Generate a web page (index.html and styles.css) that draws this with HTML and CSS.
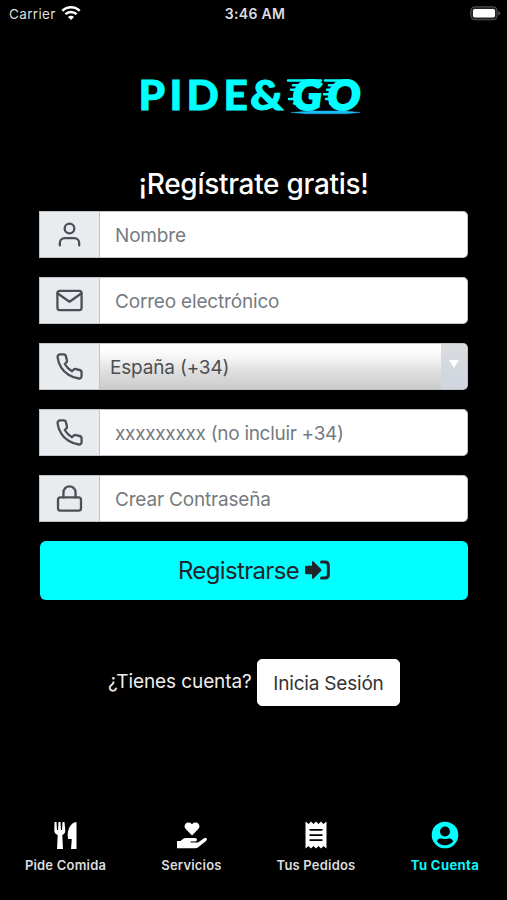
FILE: index.html
```html
<!DOCTYPE html>
<html lang="es">
<head>
<meta charset="utf-8">
<meta name="viewport" content="width=device-width">
<title>Pide&amp;Go</title>
<link rel="stylesheet" href="styles.css">
</head>
<body>
<svg width="0" height="0" class="defs">
  <symbol id="phone" viewBox="0 0 24 24"><path d="M22 16.92v3a2 2 0 0 1-2.18 2 19.79 19.79 0 0 1-8.63-3.07 19.5 19.5 0 0 1-6-6 19.79 19.79 0 0 1-3.07-8.67A2 2 0 0 1 4.11 2h3a2 2 0 0 1 2 1.72 12.84 12.84 0 0 0 .7 2.81 2 2 0 0 1-.45 2.11L8.09 9.91a16 16 0 0 0 6 6l1.27-1.27a2 2 0 0 1 2.11-.45 12.84 12.84 0 0 0 2.81.7A2 2 0 0 1 22 16.92z"/></symbol>
</svg>
<header class="status">
  <div class="carrier"><span>Carrier</span>
    <svg width="20" height="15" viewBox="0 0 20 15" fill="none" stroke="#fff" stroke-width="2.5"><path d="M1.300 4.800a12.500 12.500 0 0 1 17.400 0M4.400 8.200a8 8 0 0 1 11.200 0"/><path d="M10 14l-3-3a4.200 4.200 0 0 1 6 0z" fill="#fff" stroke="none"/></svg>
  </div>
  <time>3:46 AM</time>
  <svg class="battery" width="31" height="15" viewBox="0 0 31 15"><rect x=".8" y=".8" width="26.4" height="13" rx="4" fill="#222" stroke="#555"/><rect x="3" y="3" width="22" height="8.6" rx="1.8" fill="#fff"/><path d="M28.4 5v4.6q1.8-.7 1.8-2.3T28.4 5z" fill="#555"/></svg>
</header>
<main>
  <svg class="logo" width="230" height="42" viewBox="0 0 230 42" fill="#0ff" stroke="#0ff">
    <text class="pide" x="-1.5 29.500 46.500 83.500" y="35">PIDE</text>
    <text class="pide" transform="translate(110 35) scale(1.080 1)">&amp;</text>
    <text class="go" transform="translate(152.500 34.500) scale(1.060 1)" x="0 33" y="0">GO</text>
    <path class="speed" d="M148 5.500h33M153 10.300h9M151 14.800h8M155 19.300h3M149 24h9M154 28.500h5M185 5.500h23M189 10.300h9M187 14.800h8M184 19.300h10M186 24h8M190 28.500h6"/>
    <path class="ground" d="M151 37.500l20-1.500h35l14 1.500-14 1.300h-40z"/>
  </svg>
  <h1>¡Regístrate gratis!</h1>
  <form>
    <label class="field"><span class="addon"><svg viewBox="0 0 24 24"><path d="M20 21v-2a4 4 0 0 0-4-4H8a4 4 0 0 0-4 4v2"/><circle cx="12" cy="7" r="4"/></svg></span><span class="input">Nombre</span></label>
    <label class="field"><span class="addon"><svg viewBox="0 0 24 24"><rect x="2" y="4" width="20" height="16" rx="2"/><path d="M22 6l-10 7L2 6"/></svg></span><span class="input">Correo electrónico</span></label>
    <label class="field"><span class="addon"><svg><use href="#phone"/></svg></span><span class="input select"><span>España (+34)</span><span class="caret"><i></i></span></span></label>
    <label class="field"><span class="addon"><svg><use href="#phone"/></svg></span><span class="input hint">xxxxxxxxx (no incluir +34)</span></label>
    <label class="field"><span class="addon"><svg viewBox="0 0 24 24"><rect x="2.500" y="11" width="19" height="11" rx="2"/><path d="M7 11V7a5 5 0 0 1 10 0v4"/></svg></span><span class="input">Crear Contraseña</span></label>
    <button class="submit" type="button"><span>Registrarse</span>
      <svg width="25" height="20" viewBox="0 0 25 20"><path d="M0 7q0-1.300 1.300-1.300H7V2.200Q7 .3 8.600 1.600L16 9q1 1 0 2l-7.400 7.400Q7 19.700 7 17.800v-3.500H1.300Q0 14.300 0 13z"/><path class="door" d="M16.500 2H20q3.300 0 3.300 3.300v9.400Q23.300 18 20 18h-3.500"/></svg>
    </button>
  </form>
  <div class="login"><span>¿Tienes cuenta?</span><button type="button">Inicia Sesión</button></div>
</main>
<nav>
  <a><svg width="25" height="28" viewBox="0 0 25 28"><path d="M1.500 1h2l.5 8h1l.5-8h2l.5 8h1l.5-8h2l.8 8.500q0 3-3 4.500l.7 14H4l.7-14q-3.400-1.500-3.400-4.500zM23.500 1v27H18l.8-10H15C13.500 9 17.500 1.500 23.500 1z"/></svg><span>Pide Comida</span></a>
  <a><svg width="32" height="28" viewBox="0 0 32 28"><path d="M16 14.500L9.500 7.800C6.500 4.500 11-1.500 16 3c5-4.500 9.500 1.500 6.500 4.800zM1 20h3.500l2.800-2.200q1-.8 2.500-.8H19q2 0 2 1.700T19 20.400h-4.500v1.100H22l6-4.300q1.500-1 2.600.2.900 1.300-.6 2.500L22.500 26q-1.500 1.200-3.500 1.200H1z"/></svg><span>Servicios</span></a>
  <a><svg width="22" height="28" viewBox="0 0 22 28"><path fill-rule="evenodd" d="M.5.500l3 2.500L6 .5 8.500 3 11 .5 13.500 3 16 .5 18.500 3l3-2.500v27l-3-2.500-2.500 2.500-2.500-2.500-2.500 2.500L8.500 25 6 27.500 3.500 25l-3 2.500zM4.500 8v1.800h13V8zm0 5.200V15h13v-1.800zm0 5.100v1.800h13v-1.800z"/></svg><span>Tus Pedidos</span></a>
  <a class="active"><svg width="28" height="28" viewBox="0 0 28 28"><circle cx="14" cy="14" r="13.300"/><circle cx="14" cy="10.500" r="5" fill="#000"/><path fill="#000" d="M5.800 20.300c1.500-3.200 4.500-2.800 5.700-2.500q2.500.6 5 0c1.200-.3 4.200-.7 5.700 2.500a10.500 10.500 0 0 1-16.400 0z"/></svg><span>Tu Cuenta</span></a>
</nav>
</body>
</html>
```
FILE: styles.css
```css
* { box-sizing: border-box; }
body { margin: 0; height: 900px; background: #000; color: #fff; font-family: Inter, "Liberation Sans", sans-serif; display: flex; flex-direction: column; overflow: hidden; }
.defs { display: none; }
.status { height: 28px; padding: 0 6px 0 9px; display: grid; grid-template-columns: 1fr auto 1fr; align-items: center; font-size: 13.5px; color: #ddd; }
.carrier { display: flex; align-items: center; gap: 5px; letter-spacing: .35px; }
.carrier svg { margin-top: -1px; }
.status time { font-weight: 600; font-size: 14px; letter-spacing: .3px; margin-top: -1px; }
.battery { justify-self: end; margin-top: -1px; }
main { flex: 1; padding-top: 47px; display: flex; flex-direction: column; }
.logo { margin-left: 140px; display: block; overflow: visible; }
.logo text { font-family: Lato, sans-serif; font-weight: 900; }
.pide { font-size: 42.5px; stroke-width: .8; }
.go { font-size: 41px; font-style: italic; stroke-width: 2; }
.speed { stroke-width: 2.5; fill: none; stroke-linecap: round; }
.ground { fill: #18bdf5; stroke: #18bdf5; stroke-width: .4; }
h1 { margin: 49px 0 0; height: 36px; line-height: 36px; text-align: center; font-size: 28px; font-weight: 500; letter-spacing: -.3px; }
form { margin: 9px 39px 0; display: flex; flex-direction: column; gap: 19px; }
.field { height: 47px; display: flex; }
.addon { width: 61px; background: #e9ecef; border: 1px solid #bdc3c8; display: flex; align-items: center; justify-content: center; }
.addon svg { width: 29px; height: 29px; fill: none; stroke: #495057; stroke-width: 1.9; stroke-linecap: round; stroke-linejoin: round; }
.input { flex: 1; padding: 2px 0 0 15px; background: #fff; border: 1px solid #bdc3c8; border-left: 0; border-radius: 0 5px 5px 0; color: #757b80; font-size: 19px; letter-spacing: -.18px; display: flex; align-items: center; }
.hint { letter-spacing: -.3px; }
.select { padding: 0 0 0 10px; color: #4b4f53; background: linear-gradient(#fff 10%, #f4f4f4 32%, #dcdcdc 65%, #ccc); justify-content: space-between; overflow: hidden; }
.select > span:first-child { padding-top: 2px; }
.caret { width: 26px; height: 100%; background: linear-gradient(#d9dddf, #d0d5df); display: flex; justify-content: center; padding-top: 16px; }
.caret i { width: 0; height: 0; border: 5px solid transparent; border-top: 8px solid #fff; border-bottom: 0; }
.submit { margin-left: 1px; height: 59px; border: 0; border-radius: 6px; background: #0ff; color: #212529; font: 24px Inter, sans-serif; letter-spacing: -.65px; display: flex; align-items: center; justify-content: center; gap: 6px; padding: 0; }
.submit svg { fill: #212529; margin-top: -2px; }
.door { fill: none; stroke: #212529; stroke-width: 3; stroke-linecap: round; }
.login { margin: 59px 0 0 108px; display: flex; align-items: center; font-size: 19px; letter-spacing: -.1px; gap: 5px; }
.login > span { width: 144px; white-space: nowrap; margin-top: -3px; color: #eee; }
.login button { width: 143px; height: 47px; border: 1px solid #fff; border-radius: 5px; background: #fff; color: #333; font: 19px Inter, sans-serif; letter-spacing: -.2px; padding: 2px 0 0; }
nav { height: 81px; padding-left: 5px; display: grid; grid-template-columns: 121px 131px 118px 140px; }
nav a { display: flex; flex-direction: column; align-items: center; font-size: 13px; font-weight: 600; letter-spacing: .2px; color: #ddd; gap: 8px; white-space: nowrap; padding-top: 2px; }
nav svg { fill: #fff; display: block; }
nav .active { color: #0ef5fb; font-weight: 700; letter-spacing: .4px; }
.active svg { fill: #0ff; }
```
